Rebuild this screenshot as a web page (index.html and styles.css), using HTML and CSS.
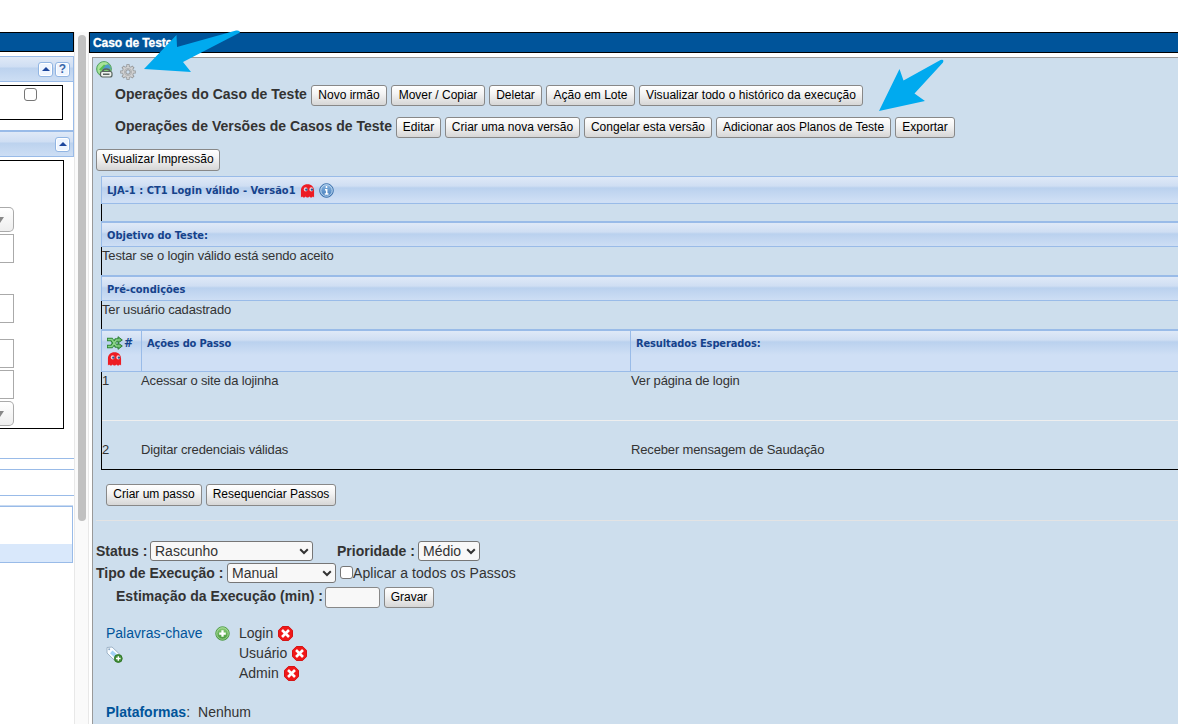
FILE: index.html
```
<!DOCTYPE html>
<html lang="pt-BR">
<head>
<meta charset="utf-8">
<title>Caso de Teste</title>
<link rel="stylesheet" href="styles.css">
</head>
<body>
<svg class="defs" width="0" height="0">
  <defs>
    <linearGradient id="gGreen" x1="0" y1="0" x2="0" y2="1"><stop offset="0" stop-color="#8fd07c"/><stop offset="1" stop-color="#3f9434"/></linearGradient>
    <linearGradient id="gBlue" x1="0" y1="0" x2="0" y2="1"><stop offset="0" stop-color="#8db8e2"/><stop offset="1" stop-color="#3d78b8"/></linearGradient>
    <symbol id="ghost" viewBox="0 0 16 16">
      <path d="M1 15V7.5C1 3.500 3.800.7 8 .7s7 2.800 7 6.800V15l-1.200-1.200-1.300 1.200h-1.300L10 13.800 8.800 15H7.200L6 13.800 4.800 15H3.500l-1.300-1.200z" fill="#ed1c24"/>
      <ellipse cx="6" cy="6.300" rx="2" ry="2.300" fill="#f6c9cf"/><ellipse cx="12" cy="6.300" rx="2" ry="2.300" fill="#f6c9cf"/>
      <circle cx="6.800" cy="6.500" r="1.250" fill="#245b95"/><circle cx="12.800" cy="6.500" r="1.250" fill="#245b95"/>
    </symbol>
    <symbol id="del" viewBox="0 0 16 16">
      <path d="M4.700.5h6.600l4.200 4.200v6.600l-4.200 4.200H4.700L.5 11.300V4.700z" fill="#f01818" stroke="#d40c0c"/>
      <path d="M5.300 5.300l5.400 5.400M10.700 5.300l-5.400 5.400" stroke="#fff" stroke-width="2.800" stroke-linecap="square"/>
    </symbol>
    <symbol id="add" viewBox="0 0 16 16">
      <circle cx="8" cy="8" r="7.200" fill="url(#gGreen)" stroke="#4c9a42"/>
      <circle cx="8" cy="8" r="6.100" fill="none" stroke="#b9e2ae" stroke-width=".8"/>
      <path d="M8 4.500v7M4.500 8h7" stroke="#fff" stroke-width="2.400"/>
    </symbol>
  </defs>
</svg>
<div class="app">
  <aside class="side">
    <div class="titlebar side-title"></div>
    <section class="panel panel-a">
      <header class="panel-head">
        <span class="tool"><svg width="8" height="4" viewBox="0 0 8 4"><path d="M0 4l4-4 4 4z" fill="#1d479d"/></svg></span>
        <span class="tool q">?</span>
      </header>
      <div class="box box-a"><span class="check"></span></div>
    </section>
    <section class="panel panel-b">
      <header class="panel-head">
        <span class="tool"><svg width="8" height="4" viewBox="0 0 8 4"><path d="M0 4l4-4 4 4z" fill="#1d479d"/></svg></span>
      </header>
      <div class="box box-b">
        <span class="fake-select"><svg width="8" height="6" viewBox="0 0 8 6"><path d="M0 0h8L4 6z" fill="#888"/></svg></span>
        <span class="fake-input"></span>
        <span class="fake-input gap-l"></span>
        <span class="fake-input gap-m"></span>
        <span class="fake-input"></span>
        <span class="fake-select last"><svg width="8" height="6" viewBox="0 0 8 6"><path d="M0 0h8L4 6z" fill="#888"/></svg></span>
      </div>
    </section>
    <div class="strip"></div>
    <div class="strip tall"></div>
    <div class="tree"><div class="tree-sel"></div></div>
  </aside>
  <div class="scroll"><div class="thumb"></div></div>
  <main class="main">
    <h1 class="titlebar main-title">Caso de Teste</h1>
    <div class="work">
      <div class="icons">
        <svg width="17" height="17" viewBox="0 0 17 17">
          <circle cx="8" cy="8" r="7.400" fill="#7ccb70" stroke="#55a367"/>
          <path d="M1.500 8C1.500 4 4.500 1.300 8 1.300c2 0 3 .4 4 1.200L9 5 4 10l0 3C2.500 12 1.500 10.500 1.500 8z" fill="#a9e39a"/>
          <path d="M8.500 4L13 3.500l2 4.500-3-.5L8 8.500 6 8z" fill="#4f9acb"/><path d="M3 8.500l5-5 1.500 1L5 9.500z" fill="#58c04f"/>
          <rect x="4.500" y="10.500" width="11.500" height="5.500" rx="2" fill="#eef2ee" stroke="#59645f" stroke-width="1.200"/>
          <path d="M6.500 10.500c.5-3.500 7-3.500 7.500 0M7 13.200h6.500" fill="none" stroke="#59645f" stroke-width="1.500"/>
        </svg>
        <svg class="gear" width="16" height="16" viewBox="0 0 16 16">
          <g stroke="#909192" stroke-width="3.200"><path d="M8 .3v15.400M.3 8h15.400M2.600 2.600l10.800 10.800M13.400 2.600L2.600 13.400"/></g>
          <circle cx="8" cy="8" r="5.600" fill="#cfd0d1" stroke="#999a9b" stroke-width=".8"/>
          <g stroke="#d3d4d5" stroke-width="1.700"><path d="M8 1.100v13.800M1.100 8h13.800M3.200 3.200l9.600 9.600M12.800 3.200l-9.600 9.600"/></g>
          <circle cx="8" cy="8" r="3.600" fill="#d0d1d2" stroke="#b2b3b4"/>
          <circle cx="8" cy="8" r="2.200" fill="#cddeee" stroke="#929394"/>
        </svg>
      </div>
      <div class="ops"><b class="lbl l1">Operações do Caso de Teste</b><button class="w75">Novo irmão</button><button class="w94">Mover / Copiar</button><button class="w53">Deletar</button><button class="w89">Ação em Lote</button><button class="w224">Visualizar todo o histórico da execução</button></div>
      <div class="ops"><b class="lbl l2">Operações de Versões de Casos de Teste</b><button class="w45">Editar</button><button class="w135">Criar uma nova versão</button><button class="w128">Congelar esta versão</button><button class="w175">Adicionar aos Planos de Teste</button><button class="w60">Exportar</button></div>
      <div class="print"><button class="w124">Visualizar Impressão</button></div>
      <div class="table">
        <div class="th h-title"><span class="ttl">LJA-1 : CT1 Login válido - Versão1</span><svg class="gh" width="15" height="16"><use href="#ghost"/></svg>
          <svg width="15" height="15" viewBox="0 0 15 15"><circle cx="7.500" cy="7.500" r="6.800" fill="url(#gBlue)" stroke="#3b70ab"/><circle cx="7.500" cy="7.500" r="5.700" fill="none" stroke="#c9dff3" stroke-width=".9"/><path d="M7.500 3v2M6 6.700h1.700V11M5.700 11h3.800" fill="none" stroke="#fff" stroke-width="1.500"/></svg>
        </div>
        <div class="td d-blank"></div>
        <div class="th h-sec">Objetivo do Teste:</div>
        <div class="td d-sec">Testar se o login válido está sendo aceito</div>
        <div class="th h-sec">Pré-condições</div>
        <div class="td d-sec">Ter usuário cadastrado</div>
        <div class="steps-head">
          <div class="th c1"><div class="c1-top"><svg width="16" height="14" viewBox="0 0 16 14"><path d="M0 3.500h4.500l4.500 6.500H12M0 10.500h4.500L9 4H12" fill="none" stroke="#2e8636" stroke-width="3.600"/><path d="M11 .7L15.300 4 11 7zM11 7l4.300 3L11 13.300z" fill="#63b963" stroke="#2e7d36"/><path d="M.8 3.500h4l4.500 6.500H12.500M.8 10.500h4L9.300 4H12.500" fill="none" stroke="#8ad287" stroke-width="1.700"/></svg>#</div><svg width="15" height="16"><use href="#ghost"/></svg></div>
          <div class="th c2">Ações do Passo</div>
          <div class="th c3">Resultados Esperados:</div>
        </div>
        <div class="step s1"><span>1</span><span>Acessar o site da lojinha</span><span>Ver página de login</span></div>
        <div class="step s2"><span>2</span><span>Digitar credenciais válidas</span><span>Receber mensagem de Saudação</span></div>
      </div>
      <div class="step-btns"><button class="w96">Criar um passo</button><button class="w130">Resequenciar Passos</button></div>
      <div class="row r-status"><b>Status :</b><span class="sel w163">Rascunho<svg width="10" height="7" viewBox="0 0 10 7"><path d="M1.200 1.300L5 5l3.800-3.700" fill="none" stroke="#333" stroke-width="2"/></svg></span><b class="prio">Prioridade :</b><span class="sel w62">Médio<svg width="10" height="7" viewBox="0 0 10 7"><path d="M1.200 1.300L5 5l3.800-3.700" fill="none" stroke="#333" stroke-width="2"/></svg></span></div>
      <div class="row r-type"><b>Tipo de Execução :</b><span class="sel w109">Manual<svg width="10" height="7" viewBox="0 0 10 7"><path d="M1.200 1.300L5 5l3.800-3.700" fill="none" stroke="#333" stroke-width="2"/></svg></span><span class="check all"></span><span>Aplicar a todos os Passos</span></div>
      <div class="row r-est"><b>Estimação da Execução (min) :</b><span class="est"></span><button class="w50">Gravar</button></div>
      <div class="kw">
        <div class="kw-l"><a>Palavras-chave</a>
          <svg width="17" height="17" viewBox="0 0 17 17"><path d="M1 1.500l5-.5 8 7.500-5.500 6L1 7z" fill="#f8fcff" stroke="#9fb4c8"/><path d="M6.500 4.500l4.500 4-2.500 3L4 7.300z" fill="#a5d2f6"/><circle cx="3.200" cy="3.300" r="1" fill="#8eaac5"/><circle cx="12.300" cy="12.500" r="3.900" fill="#449039" stroke="#317729"/><path d="M12.300 10.200v4.600M10 12.500h4.600" stroke="#fff" stroke-width="1.400"/></svg></div>
        <svg class="add" width="15" height="15"><use href="#add"/></svg>
        <div class="kw-r"><div>Login<svg width="15" height="15"><use href="#del"/></svg></div><div>Usuário<svg width="15" height="15"><use href="#del"/></svg></div><div>Admin<svg width="15" height="15"><use href="#del"/></svg></div></div>
      </div>
      <div class="plat"><a><b>Plataformas</b></a>:<span>Nenhum</span></div>
    </div>
  </main>
</div>
<svg class="arrows" width="1178" height="724" viewBox="0 0 1178 724">
  <path d="M144 69L176.500 35l.5 12 59-16.500q4-.5 4 2L183 62l8 10z" fill="#00aaef"/>
  <path d="M879 111L899.500 69l4 11.500 37-20.500q4-1 2.500 2.500L914.500 93.500 925 101z" fill="#00aaef"/>
</svg>
</body>
</html>
```
FILE: styles.css
```
* { box-sizing: border-box; }
body { margin: 0; background: #fff; width: 1178px; height: 724px; overflow: hidden; font-family: "Liberation Sans", Arial, sans-serif; font-size: 14px; color: #333; }
.defs { display: block; position: absolute; }
svg { display: block; flex: none; }
.app { display: flex; height: 724px; padding-top: 32px; white-space: nowrap; }
.titlebar { background: #00549a; border: 1px solid #000; height: 21px; margin: 0; }

.side { width: 74px; flex: none; display: flex; flex-direction: column; }
.side-title { border-left: 0; height: 20px; }
.panel { border: 1px solid #99bbe8; border-left: 0; }
.panel-a { margin-top: 4px; height: 75px; }
.panel-b { height: 302px; border-right: 0; border-bottom: 0; }
.panel-head { display: flex; justify-content: flex-end; align-items: center; gap: 2px; height: 25px; padding-right: 3px; border-bottom: 1px solid #99bbe8; background: linear-gradient(#dfe9f7 0, #cfdef3 10px, #bcd2ee 11px, #cddef4 24px); }
.panel-b .panel-head { border-right: 1px solid #99bbe8; padding-right: 3px; }
.tool { display: flex; align-items: center; justify-content: center; width: 15px; height: 15px; border: 1px solid #91b5e3; border-radius: 3px; background: #eef5ff; box-shadow: inset 0 0 0 1px #fff; }
.q { font-weight: bold; font-size: 12px; color: #3967a9; }
.box { border: 1px solid #000; border-left: 0; }
.box-a { width: 63px; height: 35px; margin-top: 3px; padding: 2px 0 0 24px; }
.check { display: block; width: 13px; height: 13px; border: 1px solid #767676; border-radius: 3px; background: #fff; }
.box-b { width: 64px; height: 269px; margin-top: 3px; padding-top: 46px; display: flex; flex-direction: column; gap: 2px; }
.fake-select { width: 14px; height: 25px; border: 1px solid #aaa; border-left: 0; border-radius: 0 5px 5px 0; background: linear-gradient(#fff, #eee); display: flex; align-items: center; }
.fake-select svg { margin-left: -4px; }
.fake-input { width: 14px; height: 29px; border: 1px solid #aaa; border-left: 0; }
.gap-l { margin-top: 29px; }
.gap-m { margin-top: 14px; }
.strip { height: 12px; border-top: 1px solid #99bbe8; border-bottom: 1px solid #99bbe8; margin-top: 25px; }
.strip.tall { height: 26px; border-top: 0; margin-top: 0; }
.tree { height: 57px; margin-top: 10px; border: 1px solid #99bbe8; border-left: 0; padding-top: 37px; width: 73px; box-shadow: 0 -1px #c9dbf2; }
.tree-sel { height: 18px; background: #d9e8fb; }

.scroll { width: 15px; flex: none; background: #fafafa; border: solid #e8e8e8; border-width: 0 1px; padding: 3px 0 0 3px; }
.thumb { width: 8px; height: 486px; border-radius: 4px; background: #c1c1c1; }

.main { flex: 1; display: flex; flex-direction: column; }
.main-title { color: #fff; font-size: 12px; line-height: 20px; letter-spacing: -.1px; -webkit-text-stroke: .3px #fff; padding-left: 3px; border-right: 0; }
.work { margin: 4px 0 0 3px; flex: 1; background: #cddeed; border: solid #999; border-width: 1px 0 0 1px; padding-left: 3px; }
.icons { display: flex; gap: 7px; height: 23px; padding-top: 3px; }
.gear { margin-top: 3px; }
button { height: 21px; border: 1px solid #888; border-radius: 3px; padding: 0 0 1px; text-align: center; font: 12px/18px "Liberation Sans", Arial, sans-serif; color: #000; background: linear-gradient(#fff, #f4f4f4 40%, #d6d6d6); flex: none; }
.w45 { width: 45px; } .w50 { width: 50px; } .w53 { width: 53px; } .w60 { width: 60px; } .w75 { width: 76px; }
.w89 { width: 89px; } .w94 { width: 94px; } .w96 { width: 96px; } .w124 { width: 124px; } .w128 { width: 128px; }
.w130 { width: 130px; } .w135 { width: 135px; } .w175 { width: 175px; }
.w224 { width: 224px; letter-spacing: .05px; }
.ops { display: flex; gap: 4px; height: 32px; padding: 4px 0 0 19px; }
.lbl { font-size: 14px; line-height: 19px; letter-spacing: .03px; margin-right: 0; }
.l1 { width: 192px; }
.l2 { width: 277px; }
.print { height: 31px; padding-top: 4px; }
.print button, .step-btns button { height: 22px; padding-bottom: 3px; }
.table { margin-left: 5px; border-left: 1px solid #000; border-bottom: 1px solid #000; height: 294px; font-size: 13px; letter-spacing: -.145px; }
.th { border: 1px solid #99bbe8; border-right: 0; margin-left: -1px; padding-left: 5px; color: #15428b; font: bold 11px "DejaVu Sans Condensed", "DejaVu Sans", sans-serif; letter-spacing: -.12px; background: linear-gradient(#dfe9f7 0, #cfdef3 9px, #bad1ee 11px, #cfdff5 24px); }
.h-title { display: flex; height: 28px; align-items: center; gap: 4px; letter-spacing: .03px; }
.gh { position: relative; top: 1px; }
.td { line-height: 17px; }
.d-blank { height: 17px; }
.h-sec { height: 26px; line-height: 25px; border-top-width: 2px; letter-spacing: 0; }
.d-sec { height: 28px; }
.steps-head { display: flex; height: 43px; }
.steps-head .th { border-top-width: 2px; padding-top: 6px; }
.steps-head .c1 { width: 40px; padding-top: 4px; }
.c1-top { display: flex; gap: 1px; align-items: center; height: 16px; font-size: 12px; }
.steps-head .c2 { width: 490px; margin-left: 0; }
.steps-head .c3 { flex: 1; margin-left: -1px; }
.step { display: grid; grid-template-columns: 39px 490px 1fr; line-height: 17px; }
.s1 { height: 49px; border-bottom: 1px solid #eee; }
.s2 { height: 48px; padding-top: 20px; }
.step-btns { display: flex; gap: 4px; height: 51px; margin-bottom: 19px; padding: 14px 0 0 10px; border-bottom: 1px solid #e3e3e3; }
.row { display: flex; align-items: center; gap: 4px; height: 22px; font-size: 14px; }
.sel { display: flex; align-items: center; justify-content: space-between; height: 20px; padding: 0 3px 0 4px; border: 1px solid #767676; border-radius: 3px; background: #f8f8f8; }
.w163 { width: 163px; }
.w62 { width: 62px; }
.w109 { width: 109px; }
.prio { margin-left: 20px; }
.r-status b:first-child { width: 50px; }
.r-status .prio { width: 77px; }
.r-type b { width: 127px; }
.r-type .check { margin-top: -2px; }
.r-est b { width: 205px; margin-top: -2px; letter-spacing: .03px; }
.all + span { margin-left: -4px; letter-spacing: .07px; }
.r-est { height: 26px; padding-left: 20px; }
.est { width: 55px; height: 21px; border: 1px solid #888; border-radius: 3px; background: #f8f8f8; }
.kw { display: flex; margin-top: 13px; padding-left: 10px; height: 79px; line-height: 20px; }
.kw-l { width: 109px; }
.kw-l svg { margin-top: 3px; }
a { color: #00549a; }
.add { margin: 3px 9px 0 0; }
.kw-r div { display: flex; gap: 5px; align-items: center; height: 20px; }
.plat { padding-left: 10px; line-height: 20px; }
.plat span { margin-left: 8px; }
.arrows { position: absolute; left: 0; top: 0; }
```
